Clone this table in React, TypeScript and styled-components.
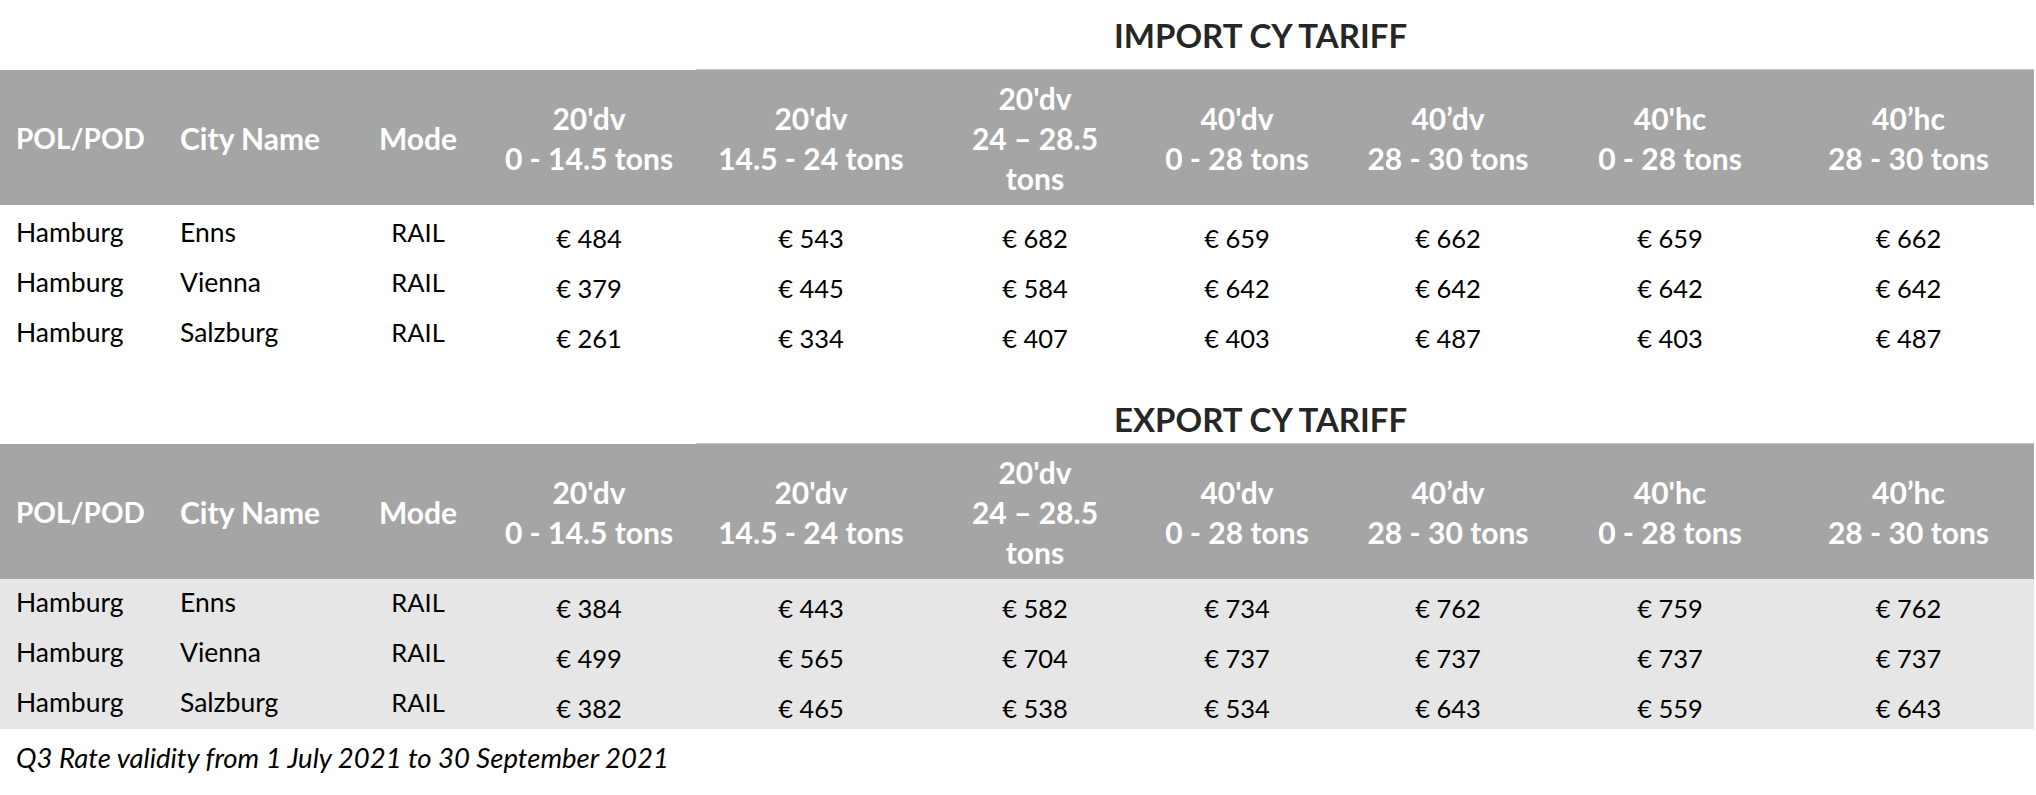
import React from "react"
import styled, { createGlobalStyle } from "styled-components"

const GlobalStyle = createGlobalStyle`
    html, body {
        margin: 0;
        padding: 0;
        background: #fff;
    }
    body {
        font-family: Lato, "Open Sans", sans-serif;
        color: #000;
    }
`

const COLUMNS = "165px 180px 146px 196px 248px 200px 204px 218px 226px 251px"

const headers: string[][] = [
    ["POL/POD"],
    ["City Name"],
    ["Mode"],
    ["20'dv", "0 - 14.5 tons"],
    ["20'dv", "14.5 - 24 tons"],
    ["20'dv", "24 – 28.5", "tons"],
    ["40'dv", "0 - 28 tons"],
    ["40’dv", "28 - 30 tons"],
    ["40'hc", "0 - 28 tons"],
    ["40’hc", "28 - 30 tons"],
]

type Rate = { pol: string; city: string; mode: string; prices: number[] }

const importRates: Rate[] = [
    { pol: "Hamburg", city: "Enns", mode: "RAIL", prices: [484, 543, 682, 659, 662, 659, 662] },
    { pol: "Hamburg", city: "Vienna", mode: "RAIL", prices: [379, 445, 584, 642, 642, 642, 642] },
    { pol: "Hamburg", city: "Salzburg", mode: "RAIL", prices: [261, 334, 407, 403, 487, 403, 487] },
]

const exportRates: Rate[] = [
    { pol: "Hamburg", city: "Enns", mode: "RAIL", prices: [384, 443, 582, 734, 762, 759, 762] },
    { pol: "Hamburg", city: "Vienna", mode: "RAIL", prices: [499, 565, 704, 737, 737, 737, 737] },
    { pol: "Hamburg", city: "Salzburg", mode: "RAIL", prices: [382, 465, 538, 534, 643, 559, 643] },
]

const TariffTable = ({ title, rates, shaded, first }: { title: string; rates: Rate[]; shaded?: boolean; first?: boolean }) => {
    return (<Section $first={first}>
        <TitleRow $height={first ? 70 : 50}>
            <div />
            <TitleCell>{title}</TitleCell>
        </TitleRow>
        <HeaderRow>
            {headers.map((lines, i) => (
                <HeaderCell key={i} $left={i < 2}>
                    {lines.map((l, j) => <span key={j}>{l}</span>)}
                </HeaderCell>
            ))}
        </HeaderRow>
        <Body $shaded={shaded} $top={first ? 4 : 0}>
            {rates.map((r, i) => (
                <Row key={i}>
                    <NameCell $pad={16}>{r.pol}</NameCell>
                    <NameCell $pad={15}>{r.city}</NameCell>
                    <Cell>{r.mode}</Cell>
                    {r.prices.map((p, j) => (
                        <Cell key={j} $price>€ {p}</Cell>
                    ))}
                </Row>
            ))}
        </Body>
    </Section>)
}

export default function App() {
    return (<Page>
        <GlobalStyle />
        <TariffTable title="IMPORT CY TARIFF" rates={importRates} first />
        <TariffTable title="EXPORT CY TARIFF" rates={exportRates} shaded />
        <Note>Q3 Rate validity from 1 July 2021 to 30 September 2021</Note>
    </Page>)
}

const Page = styled.div`
    width: 2036px;
    height: 795px;
    overflow: hidden;
`

const Section = styled.div<{ $first?: boolean }>`
    width: 2034px;
    margin-top: ${p => p.$first ? 0 : 35}px;
`

const TitleRow = styled.div<{ $height: number }>`
    display: grid;
    grid-template-columns: 696px 1fr;
    height: ${p => p.$height}px;
`

const TitleCell = styled.div`
    display: flex;
    align-items: center;
    padding-left: 418px;
    border-bottom: 1px solid #c4c4c4;
    font-size: 33px;
    font-weight: 700;
    color: #262626;
    white-space: nowrap;
`

const HeaderRow = styled.div`
    display: grid;
    grid-template-columns: ${COLUMNS};
    height: 135px;
    background: #a5a5a5;
    color: #fff;
`

const HeaderCell = styled.div<{ $left?: boolean }>`
    display: flex;
    flex-direction: column;
    justify-content: center;
    align-items: ${p => p.$left ? "flex-start" : "center"};
    padding-left: ${p => p.$left ? "15px" : "0"};
    font-size: 30px;
    font-weight: 700;
    line-height: 40px;
    white-space: nowrap;
    &:first-child{
        padding-left: 16px;
        font-size: 28px;
    }
`

const Body = styled.div<{ $shaded?: boolean; $top: number }>`
    background: ${p => p.$shaded ? "#e7e6e6" : "#fff"};
    padding-top: ${p => p.$top}px;
`

const Row = styled.div`
    display: grid;
    grid-template-columns: ${COLUMNS};
    height: 50px;
`

const NameCell = styled.div<{ $pad: number }>`
    padding-left: ${p => p.$pad}px;
    padding-top: 8px;
    font-size: 26.5px;
    line-height: 30px;
    white-space: nowrap;
`

const Cell = styled.div<{ $price?: boolean }>`
    padding-top: ${p => p.$price ? 14 : 8}px;
    text-align: center;
    font-size: 25.5px;
    line-height: 30px;
    white-space: nowrap;
`

const Note = styled.div`
    padding: 14px 0 0 16px;
    font-size: 27.5px;
    font-style: italic;
    line-height: 30px;
`
